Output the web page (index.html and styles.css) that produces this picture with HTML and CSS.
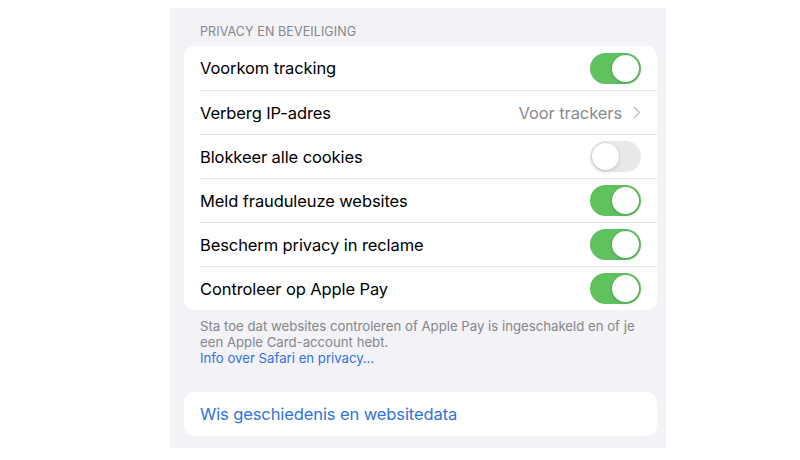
FILE: index.html
```html
<!DOCTYPE html>
<html lang="nl">
<head>
<meta charset="utf-8">
<link rel="stylesheet" href="styles.css">
</head>
<body>
<div class="panel">
  <div class="section-header">PRIVACY EN BEVEILIGING</div>
  <div class="card">
    <div class="row"><span class="label">Voorkom tracking</span><span class="toggle on"></span></div>
    <div class="row"><span class="label">Verberg IP-adres</span><span class="value">Voor trackers<svg class="chev" width="8" height="13" viewBox="0 0 8 13"><path d="M1.5 1.5 L6.5 6.5 L1.5 11.5" fill="none" stroke="#c4c4c7" stroke-width="1.6" stroke-linecap="round" stroke-linejoin="round"/></svg></span></div>
    <div class="row"><span class="label">Blokkeer alle cookies</span><span class="toggle"></span></div>
    <div class="row"><span class="label">Meld frauduleuze websites</span><span class="toggle on"></span></div>
    <div class="row"><span class="label">Bescherm privacy in reclame</span><span class="toggle on"></span></div>
    <div class="row"><span class="label">Controleer op Apple Pay</span><span class="toggle on"></span></div>
  </div>
  <div class="footer">Sta toe dat websites controleren of Apple Pay is ingeschakeld en of je een Apple Card-account hebt.<br><a class="link">Info over Safari en privacy…</a></div>
  <div class="card">
    <div class="row action">Wis geschiedenis en websitedata</div>
  </div>
</div>
</body>
</html>
```

FILE: styles.css
```css
html, body { margin: 0; padding: 0; background: #ffffff; }
body {
  font-family: Inter, "Noto Sans", sans-serif;
  padding: 8px 0 0 170px;
  height: 460px;
  box-sizing: border-box;
}
.panel {
  width: 496px;
  height: 440px;
  background: #f2f2f7;
  box-sizing: border-box;
  padding: 16px 9px 0 14px;
}
.section-header {
  font-size: 12.5px;
  color: #86868b;
  padding-left: 16px;
  letter-spacing: 0.1px;
  line-height: 16px;
  margin-bottom: 6px;
}
.card {
  background: #ffffff;
  border-radius: 10px;
  overflow: hidden;
}
.row {
  height: 44px;
  display: flex;
  align-items: center;
  justify-content: space-between;
  margin-left: 16px;
  padding-right: 16px;
  box-sizing: border-box;
  border-top: 1px solid #e3e3e6;
}
.row:first-child { border-top: none; }
.label {
  font-size: 16.5px;
  color: #000;
  letter-spacing: -0.1px;
}
.value {
  font-size: 16.5px;
  color: #8a8a8e;
  display: flex;
  align-items: center;
  gap: 11px;
  letter-spacing: -0.1px;
}
.chev { display: block; }
.toggle {
  width: 51px;
  height: 31px;
  border-radius: 16px;
  background: #e9e9ea;
  position: relative;
  box-sizing: border-box;
}
.toggle::after {
  content: "";
  position: absolute;
  top: 2px;
  left: 2px;
  width: 27px;
  height: 27px;
  border-radius: 50%;
  background: #fff;
  box-shadow: 0 0 0 0.5px rgba(0,0,0,0.08), 0 2px 4px rgba(0,0,0,0.12);
}
.toggle.on { background: #5fc25f; }
.toggle.on::after { left: 22px; }
.footer {
  font-size: 13.2px;
  color: #86868b;
  line-height: 16px;
  padding: 8px 16px 0 16px;
  margin-bottom: 26px;
}
.link { color: #2f74e0; }
.action {
  color: #2f74e0;
  font-size: 16.5px;
  letter-spacing: -0.1px;
}
```
